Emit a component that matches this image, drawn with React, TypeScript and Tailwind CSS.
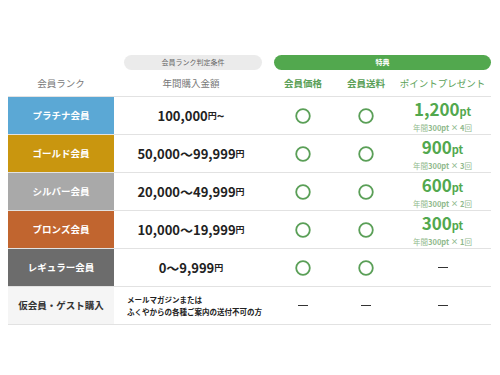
import React from "react";

type Row = {
  name: string;
  color: string;
  amount: React.ReactNode;
  price: boolean;
  shipping: boolean;
  points?: { total: string; times: string };
};

const rows: Row[] = [
  { name: "プラチナ会員", color: "bg-[#5ba8d5]", amount: <>100,000<small className="text-[9px]">円</small>~</>, price: true, shipping: true, points: { total: "1,200", times: "4" } },
  { name: "ゴールド会員", color: "bg-[#c9960f]", amount: <>50,000〜99,999<small className="text-[9px]">円</small></>, price: true, shipping: true, points: { total: "900", times: "3" } },
  { name: "シルバー会員", color: "bg-[#a9a9a9]", amount: <>20,000〜49,999<small className="text-[9px]">円</small></>, price: true, shipping: true, points: { total: "600", times: "2" } },
  { name: "ブロンズ会員", color: "bg-[#c1652f]", amount: <>10,000〜19,999<small className="text-[9px]">円</small></>, price: true, shipping: true, points: { total: "300", times: "1" } },
  { name: "レギュラー会員", color: "bg-[#6c6c6c]", amount: <>0〜9,999<small className="text-[9px]">円</small></>, price: true, shipping: true },
];

const cols = "grid grid-cols-[106px_154px_70px_56px_97px]";

function Circle() {
  return (
    <svg width="16" height="16" viewBox="0 0 16 16">
      <circle cx="8" cy="8" r="6.8" fill="none" stroke="#5a9f57" strokeWidth="1.8" />
    </svg>
  );
}

function Dash() {
  return <span className="block w-[10px] h-[1.5px] bg-[#333]" />;
}

export default function App() {
  return (
    <div
      className="w-[500px] h-[375px] bg-white pt-[55px] pl-[8px]"
      style={{ fontFamily: '"Noto Sans CJK JP", "Noto Sans", sans-serif' }}
    >
      <div className={cols}>
        <div />
        <div className="pl-[10px] pr-[6px]">
          <div className="h-[15px] rounded-full bg-[#ebebeb] flex items-center justify-center text-[7px] text-[#666]">
            会員ランク判定条件
          </div>
        </div>
        <div className="col-span-3 pl-[6px]">
          <div className="h-[15px] rounded-full bg-[#52a84e] flex items-center justify-center text-[7px] font-bold text-white">
            特典
          </div>
        </div>
      </div>

      <div className={`${cols} h-[26px] items-center text-[9.5px] text-[#777]`}>
        <div className="text-center">会員ランク</div>
        <div className="text-center">年間購入金額</div>
        <div className="text-center text-[#5a9f57] font-bold">会員価格</div>
        <div className="text-center text-[#5a9f57] font-bold">会員送料</div>
        <div className="text-center text-[#5a9f57]">ポイントプレゼント</div>
      </div>

      <div className="w-[483px] border-t border-[#e2e2e2]">
        {rows.map((r) => (
          <div key={r.name} className={`${cols} h-[38px] border-b border-[#e2e2e2]`}>
            <div className={`${r.color} flex items-center justify-center text-white font-bold text-[9.5px]`}>
              {r.name}
            </div>
            <div className="flex items-center justify-center text-[13px] font-bold text-[#222]">
              {r.amount}
            </div>
            <div className="flex items-center justify-center">{r.price && <Circle />}</div>
            <div className="flex items-center justify-center">{r.shipping && <Circle />}</div>
            <div className="flex flex-col items-center justify-center">
              {r.points ? (
                <>
                  <span className="text-[#52a84e] font-bold text-[17px] leading-[22px]">
                    {r.points.total}
                    <span className="text-[11px]">pt</span>
                  </span>
                  <span className="text-[7.5px] leading-[11px] text-[#8fb98c]">
                    年間<b>300pt × {r.points.times}</b>回
                  </span>
                </>
              ) : (
                <Dash />
              )}
            </div>
          </div>
        ))}
        <div className={`${cols} h-[38px] border-b border-[#e2e2e2]`}>
          <div className="bg-[#f5f5f5] flex items-center justify-center font-bold text-[9.5px] text-[#333]">
            仮会員・ゲスト購入
          </div>
          <div className="flex flex-col justify-center pl-[13px] text-[7.5px] font-bold text-[#222] leading-[12px] whitespace-nowrap">
            <span>メールマガジンまたは</span>
            <span>ふくやからの各種ご案内の送付不可の方</span>
          </div>
          <div className="flex items-center justify-center"><Dash /></div>
          <div className="flex items-center justify-center"><Dash /></div>
          <div className="flex items-center justify-center"><Dash /></div>
        </div>
      </div>
    </div>
  );
}
